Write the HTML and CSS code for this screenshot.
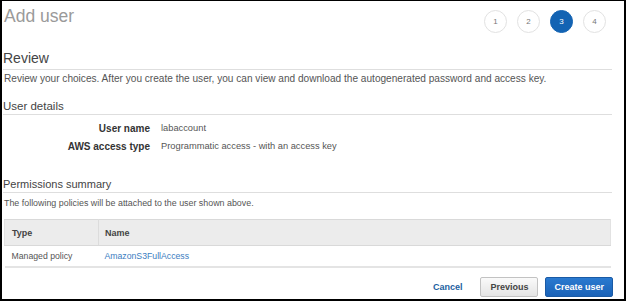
FILE: index.html
```html
<!DOCTYPE html>
<html lang="en">
<head>
    <meta charset="UTF-8">
    <meta name="viewport" content="width=device-width, initial-scale=1.0">
    <title>Add user - Review</title>
    <link rel="stylesheet" href="styles.css">
</head>
<body>
    <div class="frame">
        <header class="wizard-head">
            <h1>Add user</h1>
            <ol class="steps">
                <li>1</li>
                <li>2</li>
                <li class="active">3</li>
                <li>4</li>
            </ol>
        </header>

        <h2 class="section-title">Review</h2>
        <p class="review-note">Review your choices. After you create the user, you can view and download the autogenerated password and access key.</p>

        <h3 class="sub-title details-title">User details</h3>
        <dl class="details">
            <dt>User name</dt>
            <dd>labaccount</dd>
            <dt>AWS access type</dt>
            <dd>Programmatic access - with an access key</dd>
        </dl>

        <h3 class="sub-title perms-title">Permissions summary</h3>
        <p class="perms-note">The following policies will be attached to the user shown above.</p>
        <table class="policies">
            <thead>
                <tr>
                    <th class="col-type">Type</th>
                    <th>Name</th>
                </tr>
            </thead>
            <tbody>
                <tr>
                    <td>Managed policy</td>
                    <td><a href="#">AmazonS3FullAccess</a></td>
                </tr>
            </tbody>
        </table>

        <div class="actions">
            <a href="#" class="btn-link">Cancel</a>
            <button class="btn">Previous</button>
            <button class="btn btn-primary">Create user</button>
        </div>
    </div>
</body>
</html>
```

FILE: styles.css
```css
body {
    margin: 0;
    font-family: 'Liberation Sans', Arial, sans-serif;
    color: #444;
    background-color: #fff;
}
.frame {
    width: 626px;
    height: 301px;
    box-sizing: border-box;
    border-style: solid;
    border-color: #000;
    border-width: 1px 2px 2px 2px;
    padding: 0 12px 0 1px;
    overflow: hidden;
}
.wizard-head {
    display: flex;
    justify-content: space-between;
    align-items: flex-start;
    margin-top: 4px;
}
h1 {
    margin: 0 0 0 1px;
    font-size: 17.5px;
    line-height: 22px;
    font-weight: normal;
    color: #9a9a9a;
}
.steps {
    display: flex;
    gap: 10px;
    list-style: none;
    margin: 5px 6px 0 0;
    padding: 0;
}
.steps li {
    width: 23px;
    height: 23px;
    box-sizing: border-box;
    border: 1px solid #e2e2e2;
    border-radius: 50%;
    font-size: 8px;
    line-height: 21px;
    text-align: center;
    color: #777;
    background-color: #fff;
}
.steps li.active {
    background-color: #1363b3;
    border-color: #1363b3;
    color: #fff;
}
.section-title {
    margin: 17px 0 0 0;
    padding-bottom: 2px;
    font-size: 14px;
    line-height: 17px;
    font-weight: normal;
    color: #444;
    border-bottom: 1px solid #dedede;
}
.review-note, .perms-note {
    margin: 2px 0 0 1px;
    font-size: 10.1px;
    line-height: 13px;
    color: #555;
}
.sub-title {
    margin: 14px 0 0 0;
    font-size: 11.5px;
    line-height: 15px;
    font-weight: normal;
    color: #444;
    border-bottom: 1px solid #dedede;
}
.perms-title {
    margin-top: 24px;
    font-size: 11px;
}
.perms-note {
    margin-top: 4px;
    font-size: 8.9px;
}
.details {
    display: grid;
    grid-template-columns: 147px 1fr;
    column-gap: 11px;
    row-gap: 5px;
    margin: 7px 0 0 0;
    font-size: 9.3px;
    line-height: 13px;
}
.details dt {
    text-align: right;
    font-size: 10px;
    font-weight: bold;
    color: #333;
}
.details dd {
    margin: 0;
    color: #555;
}
.policies {
    width: 607px;
    margin: 9px 0 0 1px;
    border-collapse: collapse;
    font-size: 8.7px;
    text-align: left;
}
.policies th {
    height: 25px;
    padding: 0 6px;
    font-size: 9px;
    font-weight: bold;
    color: #444;
    background-color: #ececec;
    border-top: 1px solid #d9d9d9;
    border-bottom: 1px solid #d9d9d9;
}
.policies th.col-type {
    width: 80px;
    padding-left: 7px;
    border-left: 1px solid #e2e2e2;
    border-right: 1px solid #dcdcdc;
}
.policies th:last-child {
    border-right: 1px solid #e2e2e2;
}
.policies td {
    height: 20px;
    padding: 0 6px;
    color: #555;
    border-bottom: 2px solid #e4e4e4;
}
.policies td:first-child {
    padding-left: 7px;
}
.policies a {
    color: #3b7dc1;
    text-decoration: none;
}
.actions {
    display: flex;
    justify-content: flex-end;
    align-items: center;
    margin: 9px -1px 0 0;
}
.btn-link {
    margin-right: 9px;
    font-size: 9px;
    font-weight: bold;
    color: #22609f;
    text-decoration: none;
}
.btn {
    height: 20px;
    box-sizing: border-box;
    margin-left: 9px;
    padding: 0 9px;
    font-family: 'Liberation Sans', Arial, sans-serif;
    font-size: 9px;
    font-weight: bold;
    line-height: 18px;
    color: #444;
    background: linear-gradient(#fafafa, #e4e4e4);
    border: 1px solid #c2c2c2;
    border-radius: 2px;
}
.btn-primary {
    margin-left: 7px;
    padding: 0 8px;
    color: #fff;
    background: linear-gradient(#2a7ad0, #1a62b7);
    border-color: #1a5aa5;
}
```
